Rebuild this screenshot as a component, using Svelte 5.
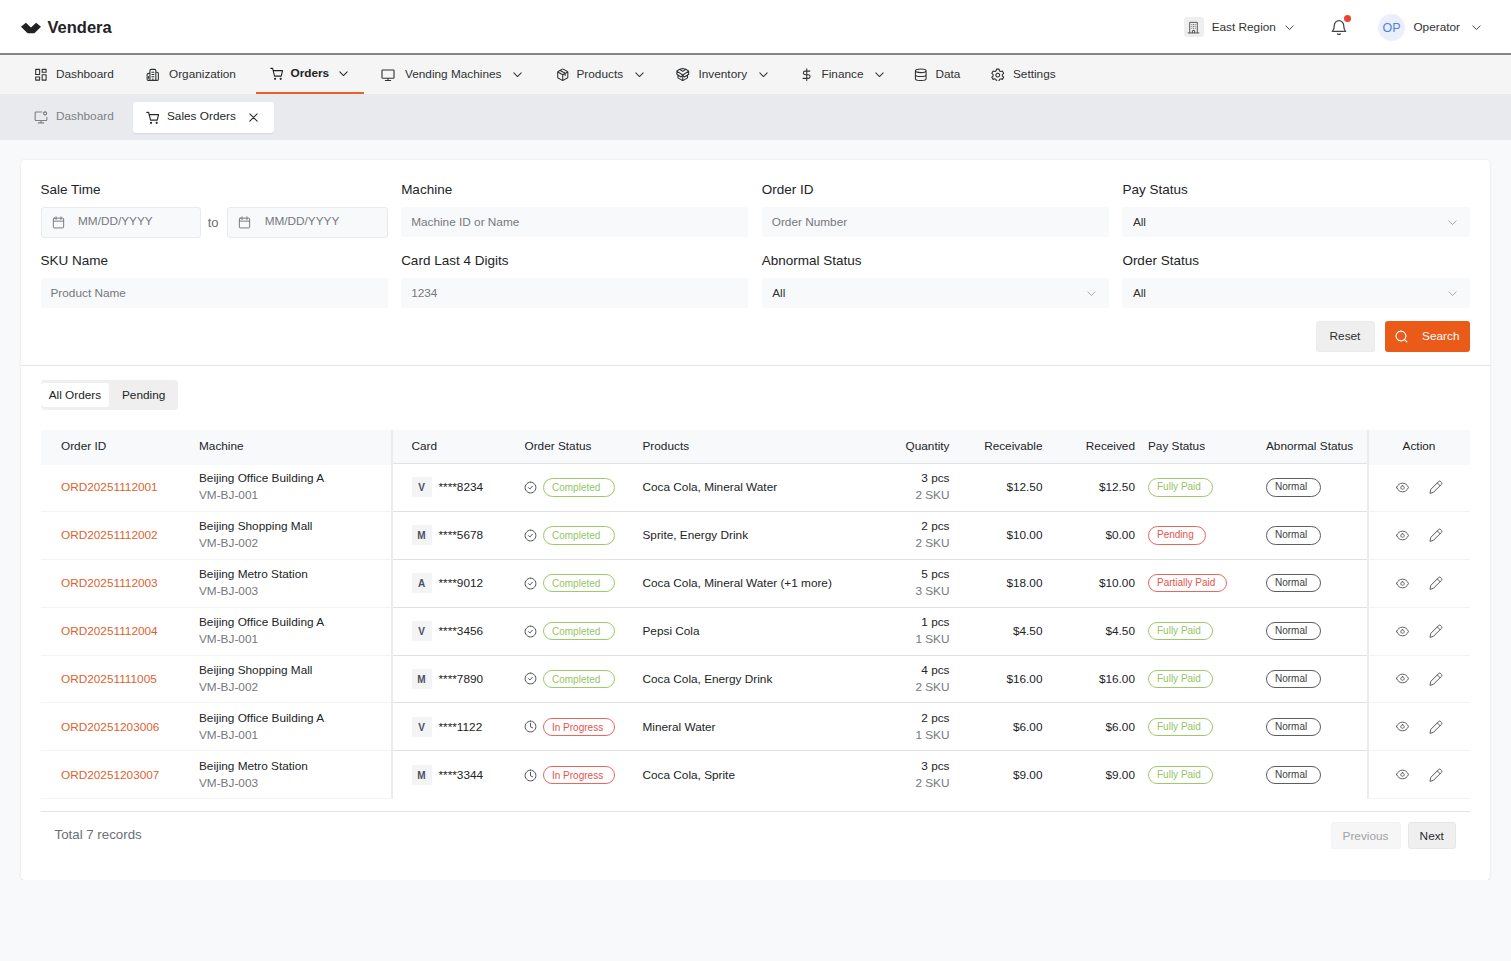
<script lang="ts">
  // Top navigation, iconWidth keeps the label spacing of each item
  const navItems = [
    { label: 'Dashboard', icon: 'grid', iconWidth: 22 },
    { label: 'Organization', icon: 'office', iconWidth: 23 },
    { label: 'Orders', icon: 'cart', iconWidth: 20.5, menu: true, active: true },
    { label: 'Vending Machines', icon: 'monitor', iconWidth: 24, menu: true },
    { label: 'Products', icon: 'box', iconWidth: 20.5, menu: true },
    { label: 'Inventory', icon: 'openBox', iconWidth: 22.5, menu: true },
    { label: 'Finance', icon: 'dollar', iconWidth: 21.5, menu: true },
    { label: 'Data', icon: 'database', iconWidth: 21.5 },
    { label: 'Settings', icon: 'gear', iconWidth: 22 }
  ];

  const filters = [
    { label: 'Sale Time', type: 'range' },
    { label: 'Machine', type: 'text', placeholder: 'Machine ID or Name' },
    { label: 'Order ID', type: 'text', placeholder: 'Order Number' },
    { label: 'Pay Status', type: 'select' },
    { label: 'SKU Name', type: 'text', placeholder: 'Product Name' },
    { label: 'Card Last 4 Digits', type: 'text', placeholder: '1234' },
    { label: 'Abnormal Status', type: 'select' },
    { label: 'Order Status', type: 'select' }
  ];

  const orders = [
    { id: 'ORD20251112001', machine: 'Beijing Office Building A', code: 'VM-BJ-001', brand: 'V', card: '8234', status: 'Completed', products: 'Coca Cola, Mineral Water', pcs: 3, sku: 2, receivable: '12.50', received: '12.50', pay: 'Fully Paid' },
    { id: 'ORD20251112002', machine: 'Beijing Shopping Mall', code: 'VM-BJ-002', brand: 'M', card: '5678', status: 'Completed', products: 'Sprite, Energy Drink', pcs: 2, sku: 2, receivable: '10.00', received: '0.00', pay: 'Pending' },
    { id: 'ORD20251112003', machine: 'Beijing Metro Station', code: 'VM-BJ-003', brand: 'A', card: '9012', status: 'Completed', products: 'Coca Cola, Mineral Water (+1 more)', pcs: 5, sku: 3, receivable: '18.00', received: '10.00', pay: 'Partially Paid' },
    { id: 'ORD20251112004', machine: 'Beijing Office Building A', code: 'VM-BJ-001', brand: 'V', card: '3456', status: 'Completed', products: 'Pepsi Cola', pcs: 1, sku: 1, receivable: '4.50', received: '4.50', pay: 'Fully Paid' },
    { id: 'ORD20251111005', machine: 'Beijing Shopping Mall', code: 'VM-BJ-002', brand: 'M', card: '7890', status: 'Completed', products: 'Coca Cola, Energy Drink', pcs: 4, sku: 2, receivable: '16.00', received: '16.00', pay: 'Fully Paid' },
    { id: 'ORD20251203006', machine: 'Beijing Office Building A', code: 'VM-BJ-001', brand: 'V', card: '1122', status: 'In Progress', products: 'Mineral Water', pcs: 2, sku: 1, receivable: '6.00', received: '6.00', pay: 'Fully Paid' },
    { id: 'ORD20251203007', machine: 'Beijing Metro Station', code: 'VM-BJ-003', brand: 'M', card: '3344', status: 'In Progress', products: 'Coca Cola, Sprite', pcs: 3, sku: 2, receivable: '9.00', received: '9.00', pay: 'Fully Paid' }
  ];

  // 24x24 stroke icons
  const icons: Record<string, string> = {
    grid: 'M3 2.500h7v9H3zM14.500 2.500h7v5h-7zM14.500 12h7v9.500h-7zM3 16h7v5.500H3z',
    office: 'M7 22V4.500a2 2 0 0 1 2-2h6.500a2 2 0 0 1 2 2v17M7 9.500H4.500A2.500 2.500 0 0 0 2 12v8a2 2 0 0 0 2 2h16a2 2 0 0 0 2-2V9.500a2 2 0 0 0-2-2h-2.500M10.500 7.500h3.500M10.500 11.500h3.500M10.500 15.500h3.500M12.200 22v-3M4.500 15v3',
    cart: 'M1.500 2.500h3.200l3.300 13.700h12l2.300-9.700H5.700',
    monitor: 'M3 3.500h18a1.300 1.300 0 0 1 1.300 1.300v11.400a1.300 1.300 0 0 1-1.300 1.300H3a1.300 1.300 0 0 1-1.300-1.300V4.800A1.300 1.300 0 0 1 3 3.500zM12 17.500V21.500M7.500 21.500h9',
    monitorDot: 'M13.500 3.500H3.500a1.500 1.500 0 0 0-1.500 1.500v11.500a1.500 1.500 0 0 0 1.500 1.500h17a1.500 1.500 0 0 0 1.500-1.500V12.500M12 18v4M7.500 22h9M19 3.200a2.600 2.600 0 1 0 .01 0',
    box: 'M21 16.500V7.500a1.500 1.500 0 0 0-.8-1.300l-7.400-4.200a1.500 1.500 0 0 0-1.500 0L3.800 6.200A1.500 1.500 0 0 0 3 7.500v9a1.500 1.500 0 0 0 .8 1.300l7.400 4.200a1.500 1.500 0 0 0 1.500 0l7.400-4.200a1.500 1.500 0 0 0 .9-1.300zM3.300 7L12 12l8.700-5M12 22V12M7.500 4.300l8.700 5v4.200',
    openBox: 'M12 12.500V22.500M3.500 13v4.500l8.500 5 8.500-5V13M12 6L6.500 2.200 1.500 5.500 12 12.500 22.500 5.500 17.500 2.200zM6.500 2.200L12 1l5.500 1.200M1.500 5.500v5.500l7.500 5 3-3.500 3 3.500 7.500-5V5.500',
    dollar: 'M12 1.500v21M17.500 5.500H9.300a3.200 3.200 0 0 0 0 6.500h5.400a3.200 3.200 0 0 1 0 6.500H5.500',
    database: 'M21.500 5c0 1.800-4.200 3.200-9.500 3.200S2.500 6.800 2.500 5 6.700 1.800 12 1.800s9.500 1.400 9.500 3.200zM2.500 5v14c0 1.800 4.200 3.200 9.500 3.200s9.500-1.400 9.500-3.200V5M2.500 12c0 1.800 4.200 3.200 9.500 3.200s9.500-1.400 9.500-3.200',
    gear: 'M9.700 2h4.600l.8 3.200 1.900 1.100 3.200-.9 2.300 4-2.400 2.300v2.200l2.400 2.300-2.300 4-3.200-.9-1.900 1.100-.8 3.100H9.700l-.8-3.100L7 19.300l-3.200.9-2.300-4 2.400-2.300v-2.200L1.500 9.400l2.300-4 3.200.9 1.900-1.100zM12 9.300a3.400 3.400 0 1 0 .01 0',
    chevron: 'M4 8.500L12 16.500l8-8',
    close: 'M4 4l16 16M20 4l-16 16',
    building: 'M5 22V2.500h14V22M2 22h20M10 22v-4.500h4V22M9 6.500h.01M12 6.500h.01M15 6.500h.01M9 10h.01M12 10h.01M15 10h.01M9 13.500h.01M12 13.500h.01M15 13.500h.01',
    bell: 'M2 18.500h20c-1.700-1.700-2.900-3.300-2.900-8.500a7.100 7.500 0 0 0-14.200 0c0 5.200-1.200 6.800-2.900 8.500zM10 22.500a2.300 1.500 0 0 0 4 0',
    calendar: 'M4 4h16a1.500 1.500 0 0 1 1.500 1.500v15A1.500 1.500 0 0 1 20 22H4a1.500 1.500 0 0 1-1.500-1.500v-15A1.500 1.500 0 0 1 4 4zM2.500 9.500h19M7.500 1.500v5M16.500 1.500v5',
    search: 'M11 2a9 9 0 1 0 .01 0M17.500 17.500L22 22',
    check: 'M12 2a10 10 0 1 0 .01 0M8.500 12.300l2.400 2.400 4.600-5',
    clock: 'M12 2a10 10 0 1 0 .01 0M12 6v6.500l4 2',
    eye: 'M1 12C3.500 6.500 7.500 4 12 4s8.500 2.500 11 8c-2.500 5.500-6.500 8-11 8S3.500 17.500 1 12zM12 8.700a3.300 3.300 0 1 0 .01 0',
    pencil: 'M1.800 22.200l1.400-6.200L16.600 2.600a2.400 2.400 0 0 1 3.400 0l1.400 1.400a2.400 2.400 0 0 1 0 3.400L8 20.800zM14.200 5l4.800 4.800'
  };
</script>

{#snippet icon(name: string, size: number, weight = 1.8)}
  <svg width={size} height={size} viewBox="0 0 24 24" fill="none" stroke="currentColor" stroke-width={weight} stroke-linecap="round" stroke-linejoin="round">
    <path d={icons[name]} />
    {#if name === 'cart'}
      <circle cx="9" cy="21" r="1" />
      <circle cx="19" cy="21" r="1" />
    {/if}
  </svg>
{/snippet}

<!-- Brand bar -->
<header class="topbar">
  <div class="brand">
    <svg width="20" height="12" viewBox="0 0 20 12" fill="#222">
      <path d="M0 4.700L4.900.7 10 5.500 15.100.7 20 4.700l-5.800 5.700c-.6.600-1.200.9-2 .9H7.800c-.8 0-1.400-.3-2-.9z" />
    </svg>
    <span>Vendera</span>
  </div>
  <div class="account">
    <span class="region-icon">{@render icon('building', 13, 1.8)}</span>
    <span class="region">East Region</span>
    {@render icon('chevron', 11, 2)}
    <span class="bell">{@render icon('bell', 16, 1.9)}<i></i></span>
    <span class="avatar">OP</span>
    <span class="operator">Operator</span>
    {@render icon('chevron', 11, 2)}
  </div>
</header>

<!-- Main navigation -->
<nav class="nav">
  {#each navItems as item}
    <div class="nav-item" class:active={item.active}>
      <span class="nav-icon" style:width="{item.iconWidth}px">{@render icon(item.icon, item.icon === 'monitor' ? 14 : 13.5, 1.9)}</span>
      <span class="nav-label">{item.label}</span>
      {#if item.menu}
        <span class="nav-chevron">{@render icon('chevron', 11, 2.2)}</span>
      {/if}
    </div>
  {/each}
</nav>

<!-- Open tabs -->
<div class="tabs">
  <div class="tab">{@render icon('monitorDot', 14, 1.9)}<span>Dashboard</span></div>
  <div class="tab current">
    {@render icon('cart', 13.5, 2)}
    <span>Sales Orders</span>
    {@render icon('close', 11, 2.2)}
  </div>
</div>

<main class="card">
  <!-- Filters -->
  <section class="filters">
    <div class="filter-grid">
      {#each filters as filter}
        <div class="field">
          <div class="label">{filter.label}</div>
          {#if filter.type === 'range'}
            <div class="range">
              <div class="date">{@render icon('calendar', 13, 1.8)}<span>MM/DD/YYYY</span></div>
              <span class="to">to</span>
              <div class="date">{@render icon('calendar', 13, 1.8)}<span>MM/DD/YYYY</span></div>
            </div>
          {:else if filter.type === 'select'}
            <div class="input select"><span>All</span>{@render icon('chevron', 11, 2)}</div>
          {:else}
            <div class="input">{filter.placeholder}</div>
          {/if}
        </div>
      {/each}
    </div>
    <div class="filter-actions">
      <button class="btn reset">Reset</button>
      <button class="btn search">{@render icon('search', 13, 2)}<span>Search</span></button>
    </div>
  </section>

  <section class="content">
    <div class="switch">
      <span class="option selected">All Orders</span>
      <span class="option">Pending</span>
    </div>

    <div class="table">
      <div class="pane left">
        <div class="row head"><span>Order ID</span><span>Machine</span></div>
        {#each orders as order}
          <div class="row">
            <span class="order-id">{order.id}</span>
            <span class="double">{order.machine}<small>{order.code}</small></span>
          </div>
        {/each}
      </div>

      <div class="pane middle">
        <div class="row head">
          <span>Card</span>
          <span>Order Status</span>
          <span>Products</span>
          <span class="num">Quantity</span>
          <span class="num">Receivable</span>
          <span class="num">Received</span>
          <span class="pay">Pay Status</span>
          <span>Abnormal Status</span>
        </div>
        {#each orders as order}
          <div class="row">
            <span class="card-cell"><b>{order.brand}</b>****{order.card}</span>
            <span class="status">
              {@render icon(order.status === 'Completed' ? 'check' : 'clock', 13, 1.8)}
              <em class="pill wide" class:green={order.status === 'Completed'} class:red={order.status !== 'Completed'}>{order.status}</em>
            </span>
            <span>{order.products}</span>
            <span class="double num">{order.pcs} pcs<small>{order.sku} SKU</small></span>
            <span class="num">${order.receivable}</span>
            <span class="num">${order.received}</span>
            <span class="pay"><em class="pill" class:green={order.pay === 'Fully Paid'} class:red={order.pay !== 'Fully Paid'}>{order.pay}</em></span>
            <span class="abnormal"><em class="pill normal">Normal</em></span>
          </div>
        {/each}
      </div>

      <div class="pane right">
        <div class="row head">Action</div>
        {#each orders as order (order.id)}
          <div class="row actions">
            {@render icon('eye', 13, 1.8)}
            {@render icon('pencil', 14, 1.7)}
          </div>
        {/each}
      </div>
    </div>

    <div class="pager">
      <span class="total">Total {orders.length} records</span>
      <button class="btn prev">Previous</button>
      <button class="btn next">Next</button>
    </div>
  </section>
</main>

<style>
  :global(body) {
    background: #f8f9fb;
    font-family: "Liberation Sans", Arial, sans-serif;
    font-size: 11.8px;
    color: #222426;
  }
  svg {
    display: block;
    flex: none;
  }
  .topbar {
    display: flex;
    justify-content: space-between;
    box-sizing: border-box;
    height: 55px;
    padding: 0 29.500px 0 20.500px;
    background: #fff;
    border-bottom: 2px solid #858688;
  }
  .brand {
    display: flex;
    align-items: center;
    gap: 7px;
    font-size: 16.5px;
    font-weight: bold;
    height: 55px;
  }
  .account {
    display: flex;
    align-items: center;
    height: 54px;
    color: #333;
  }
  .region-icon {
    display: flex;
    align-items: center;
    justify-content: center;
    width: 20px;
    height: 20px;
    background: #efefef;
    border-radius: 3px;
    color: #555;
  }
  .region {
    margin: 0 8.500px 0 8px;
  }
  .bell {
    position: relative;
    margin: 0 31px 0 35.500px;
    color: #444;
  }
  .bell i {
    position: absolute;
    top: -4px;
    right: -4px;
    width: 7px;
    height: 7px;
    border-radius: 50%;
    background: #ee4035;
  }
  .avatar {
    width: 27px;
    height: 27px;
    line-height: 28px;
    border-radius: 50%;
    background: #ebeffb;
    color: #4a83e8;
    font-size: 12.500px;
    text-align: center;
  }
  .operator {
    margin: 0 10.500px 0 8.500px;
  }
  .nav {
    display: grid;
    grid-template-columns: 112px 124px 111px 175px 120px 124px 114px 77px 110px;
    box-sizing: border-box;
    height: 40px;
    padding-left: 20px;
    background: #f5f5f5;
    border-bottom: 1px solid #e9e9ea;
  }
  .nav-item {
    display: flex;
    align-items: center;
    box-sizing: border-box;
    height: 39px;
    padding-left: 14px;
    color: #2f3133;
    white-space: nowrap;
  }
  .nav-label {
    padding-bottom: 1px;
  }
  .nav-chevron {
    margin-left: 10.500px;
  }
  .nav-item.active {
    width: 108px;
    height: 39px;
    border-bottom: 2px solid #e8632b;
    font-weight: bold;
    color: #222;
  }
  .active .nav-chevron {
    margin-left: 9px;
  }
  .tabs {
    display: flex;
    box-sizing: border-box;
    height: 45px;
    padding: 7px 20px 0;
    background: #e9eaed;
  }
  .tab {
    display: flex;
    align-items: center;
    gap: 8px;
    box-sizing: border-box;
    width: 112.500px;
    height: 30px;
    padding-left: 14px;
    color: #7c8086;
  }
  .tab span {
    padding-bottom: 2px;
  }
  .tab.current {
    width: 141px;
    height: 30.500px;
    padding-left: 13.500px;
    gap: 7.500px;
    background: #fff;
    border-radius: 3px;
    box-shadow: 0 1px 1px #d5d6da;
    color: #26282a;
  }
  .tab.current span {
    padding-bottom: 3px;
    margin-right: 4.500px;
  }
  .card {
    margin: 20px 21.500px 0 21px;
    height: 719.500px;
    background: #fff;
    border-radius: 4px;
    box-shadow: 0 1px 1px #dcdee0, 0 0 3px #e6e8eb;
  }
  .filters {
    box-sizing: border-box;
    height: 206px;
    padding: 20px 20px 0 19.500px;
    border-bottom: 1px solid #e3e5e8;
  }
  .filter-grid {
    display: grid;
    grid-template-columns: repeat(4, 1fr);
    column-gap: 13.500px;
  }
  .field {
    height: 71px;
  }
  .label {
    height: 27px;
    line-height: 19px;
    font-size: 13.500px;
  }
  .input {
    display: flex;
    align-items: center;
    height: 30px;
    padding: 0 12px 0 10px;
    background: #f8f9fb;
    border-radius: 2px;
    color: #76787b;
  }
  .select {
    justify-content: space-between;
    padding-left: 10.500px;
    color: #303234;
  }
  .select svg {
    color: #9b9ea2;
  }
  .range {
    display: flex;
    align-items: center;
    justify-content: space-between;
  }
  .date {
    display: flex;
    align-items: center;
    gap: 13.500px;
    box-sizing: border-box;
    width: 160.500px;
    height: 30.500px;
    padding-left: 10px;
    background: #f8f9fb;
    border: 1px solid #e8eaec;
    border-radius: 3px;
    color: #76787b;
  }
  .date span {
    padding-bottom: 3px;
  }
  .to {
    margin-right: 2px;
    font-size: 13px;
    color: #6c6f73;
  }
  .filter-actions {
    display: flex;
    justify-content: flex-end;
    gap: 10px;
    margin-top: -1px;
  }
  .btn {
    box-sizing: border-box;
    padding: 0;
    border: 1px solid #e5e5e6;
    border-radius: 3px;
    background: #efefef;
    font: inherit;
    color: #2c2e30;
  }
  .reset {
    width: 59px;
    height: 31px;
    padding-bottom: 1px;
    border-color: #ebebec;
  }
  .search {
    display: flex;
    align-items: center;
    justify-content: space-between;
    width: 85px;
    height: 31px;
    padding: 0 10px;
    border: 0;
    background: #ea5b1a;
    color: #fff;
  }
  .search span {
    padding-bottom: 1px;
  }
  .content {
    padding: 13.500px 20px 0 19.500px;
  }
  .switch {
    display: flex;
    align-items: center;
    box-sizing: border-box;
    width: 137.500px;
    height: 30px;
    background: #efefef;
    border-radius: 4px;
  }
  .option {
    width: 69px;
    height: 24px;
    line-height: 24px;
    text-align: center;
    border-radius: 3px;
  }
  .selected {
    background: #fff;
  }
  .table {
    display: flex;
    margin-top: 20.500px;
    height: 381px;
    border-bottom: 1px solid #e2e3e5;
  }
  .row {
    display: grid;
    align-items: center;
    box-sizing: border-box;
    height: 47.880px;
    border-bottom: 1px solid #e1e2e4;
    white-space: nowrap;
  }
  .row.head {
    height: 34px;
    background: #f8f9fb;
    padding-bottom: 1.500px;
  }
  .pane {
    box-sizing: border-box;
    height: 369px;
  }
  .left {
    width: 352.500px;
    border-right: 2px solid #ececee;
  }
  .left .row {
    grid-template-columns: 138px 1fr;
    padding-left: 20.500px;
    border-color: #f3f3f4;
  }
  .middle {
    flex: 1;
  }
  .middle .row {
    grid-template-columns: 113px 118px 214px 93px 93px 92.500px 131px 1fr;
    padding-left: 18.500px;
  }
  .middle .row:last-child {
    border-bottom: 0;
  }
  .right {
    width: 103px;
    border-left: 2px solid #ececee;
  }
  .right .row {
    border-color: #f3f3f4;
  }
  .left .head,
  .right .head {
    border-color: #f8f9fb;
    box-shadow: 0 1px 0 #f8f9fb;
  }
  .right .head {
    justify-content: center;
  }
  .right .actions {
    display: flex;
    justify-content: center;
    gap: 20px;
    color: #55585c;
  }
  .order-id {
    color: #dd6230;
  }
  .double {
    line-height: 17px;
  }
  .double small {
    display: block;
    font-size: 11.800px;
    color: #75787c;
  }
  .num {
    text-align: right;
  }
  .pay,
  .abnormal {
    display: flex;
  }
  .pay {
    padding-left: 13px;
  }
  .card-cell {
    display: flex;
    align-items: center;
    gap: 7px;
  }
  .card-cell b {
    width: 20px;
    height: 20px;
    line-height: 21px;
    text-align: center;
    font-size: 10px;
    background: #f3f4f6;
    border-radius: 2px;
    color: #4a5060;
  }
  .status {
    display: flex;
    align-items: center;
    gap: 6px;
    margin-left: -0.500px;
    color: #4a4d51;
  }
  .pill {
    box-sizing: border-box;
    height: 18.500px;
    line-height: 16px;
    padding: 0 11px 0 8px;
    border: 1px solid #5a5d61;
    border-radius: 10px;
    font-size: 10px;
    font-style: normal;
    color: #3a3d41;
  }
  .wide {
    width: 72px;
    padding-right: 0;
    line-height: 17px;
  }
  .normal {
    width: 55px;
    padding-right: 0;
  }
  .green {
    border-color: #9ccb6c;
    color: #94c563;
  }
  .red {
    border-color: #e8675f;
    color: #e5534b;
  }
  .pager {
    display: flex;
    align-items: center;
    height: 47px;
    padding: 0 13.500px 0 14px;
  }
  .total {
    flex: 1;
    padding-bottom: 2px;
    font-size: 13.300px;
    color: #6c6f73;
  }
  .prev {
    width: 70px;
    height: 27px;
    margin-right: 7px;
    border-color: #f3f3f3;
    background: #f6f6f6;
    color: #a0a2a5;
  }
  .next {
    width: 48.500px;
    height: 27px;
  }
</style>
